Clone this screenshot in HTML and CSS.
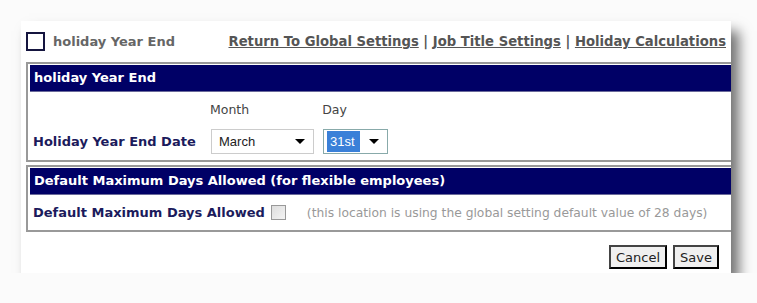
FILE: index.html
```
<!DOCTYPE html>
<html lang="en">
<head>
    <meta charset="UTF-8">
    <meta name="viewport" content="width=device-width, initial-scale=1.0">
    <title>Holiday Year End</title>
    <link rel="stylesheet" href="styles.css">
</head>
<body>
    <div class="panel">
        <div class="topbar">
            <div class="title">
                <span class="title-box"></span>
                <span class="title-text">holiday Year End</span>
            </div>
            <div class="links">
                <a href="#">Return To Global Settings</a> |
                <a href="#">Job Title Settings</a> |
                <a href="#">Holiday Calculations</a>
            </div>
        </div>

        <!-- Year end section -->
        <div class="box">
            <div class="bar">holiday Year End</div>
            <div class="date-labels">
                <span class="label-month">Month</span>
                <span class="label-day">Day</span>
            </div>
            <div class="row">
                <span class="field-name field-date">Holiday Year End Date</span>
                <div class="select select-month">
                    <span class="select-value">March</span>
                    <span class="arrow"></span>
                </div>
                <div class="select select-day">
                    <span class="select-value selected">31st</span>
                    <span class="arrow"></span>
                </div>
            </div>
        </div>

        <!-- Max days section -->
        <div class="box box-second">
            <div class="bar">Default Maximum Days Allowed (for flexible employees)</div>
            <div class="row row-days">
                <span class="field-name">Default Maximum Days Allowed</span>
                <span class="check"></span>
                <span class="note">(this location is using the global setting default value of 28 days)</span>
            </div>
        </div>

        <div class="buttons">
            <button class="button">Cancel</button>
            <button class="button">Save</button>
        </div>
    </div>
</body>
</html>
```

FILE: styles.css
```
body {
    margin: 0;
    background: #fbfbfb;
    font-family: "DejaVu Sans", Verdana, sans-serif;
}
.panel {
    margin: 21px 0 0 21px;
    width: 710px;
    height: 252px;
    background: #fff;
    box-shadow: 8px 10px 12px rgba(0, 0, 0, 0.55);
    overflow: hidden;
    box-sizing: border-box;
    padding-left: 5px;
}
.topbar {
    display: flex;
    justify-content: space-between;
    align-items: center;
    height: 41px;
}
.title {
    display: flex;
    align-items: center;
}
.title-box {
    width: 15px;
    height: 15px;
    border: 2px solid #15153f;
    margin-right: 8px;
}
.title-text {
    font-size: 13px;
    font-weight: bold;
    color: #666;
}
.links {
    font-size: 13.2px;
    font-weight: bold;
    color: #555;
    padding-right: 5px;
    white-space: nowrap;
}
.links a {
    color: #555;
    text-decoration: underline;
}
.box {
    border: 2px solid #999;
    border-right: none;
    padding: 1px 0 0 2px;
}
.box-second {
    margin-top: 3px;
}
.bar {
    background: #000066;
    color: #fff;
    font-size: 13px;
    font-weight: bold;
    height: 26px;
    line-height: 26px;
    padding-left: 4px;
    border-bottom: 1px solid #6a6a9a;
}
.date-labels {
    font-size: 12.5px;
    color: #444;
    height: 36px;
    padding-top: 10px;
    box-sizing: border-box;
}
.label-month {
    margin-left: 180px;
}
.label-day {
    margin-left: 69px;
}
.row {
    display: flex;
    align-items: center;
    height: 32px;
}
.field-name {
    font-size: 13px;
    font-weight: bold;
    color: #1b1b5c;
    padding-left: 3px;
}
.field-date {
    width: 178px;
    margin-bottom: 6px;
}
.select {
    display: flex;
    align-items: center;
    justify-content: space-between;
    height: 25px;
    box-sizing: border-box;
    border: 1px solid #ccc;
    background: #fff;
    font-family: "Liberation Sans", Arial, sans-serif;
    font-size: 13px;
    color: #222;
    padding: 0 8px 0 7px;
    margin-bottom: 6px;
}
.select-month {
    width: 103px;
}
.select-day {
    width: 65px;
    margin-left: 9px;
    border-color: #8aa;
    padding-left: 3px;
}
.selected {
    background: #3a80d8;
    color: #fff;
    padding: 3px 5px 3px 3px;
}
.arrow {
    width: 0;
    height: 0;
    border-left: 5px solid transparent;
    border-right: 5px solid transparent;
    border-top: 5px solid #000;
}
.row-days {
    height: 35px;
}
.check {
    width: 13px;
    height: 13px;
    border: 1px solid #999;
    background: linear-gradient(135deg, #ddd, #f4f4f4);
    margin-left: 6px;
}
.note {
    font-size: 12.3px;
    color: #999;
    margin-left: 21px;
    white-space: nowrap;
}
.buttons {
    display: flex;
    justify-content: flex-end;
    gap: 6px;
    margin-top: 13px;
    padding-right: 12px;
}
.button {
    font-family: "DejaVu Sans", Tahoma, sans-serif;
    font-size: 13px;
    color: #222;
    background: #f0f0f0;
    border: 2px outset #444;
    height: 24px;
    padding: 0 5px;
}
```
